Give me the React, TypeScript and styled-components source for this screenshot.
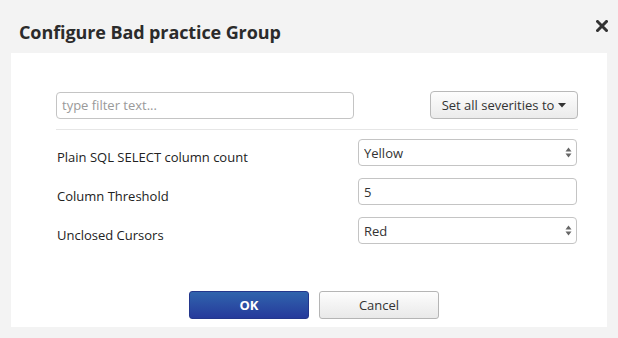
import styled, { createGlobalStyle } from 'styled-components';

const GlobalStyle = createGlobalStyle`
  html, body {
    margin: 0;
    padding: 0;
    background: #f3f3f3;
    font-family: "Open Sans", "Liberation Sans", sans-serif;
    color: #333;
  }
`;

const Dialog = styled.div`
  width: 618px;
  height: 338px;
  display: flex;
  flex-direction: column;
  background: #f3f3f3;
`;

const Header = styled.div`
  height: 53px;
  box-sizing: border-box;
  display: flex;
  justify-content: space-between;
  align-items: flex-start;
  padding: 20px 10px 0 19px;
`;

const Title = styled.h1`
  margin: 0;
  font-size: 18px;
  line-height: 24px;
  font-weight: 700;
  color: #2b2b2b;
  letter-spacing: -0.1px;
`;

const CloseButton = styled.button`
  border: 0;
  background: none;
  padding: 0;
  width: 12px;
  height: 12px;
  display: flex;
  cursor: pointer;
`;

const Panel = styled.div`
  margin-left: 11px;
  width: 596px;
  height: 274px;
  box-sizing: border-box;
  background: #fff;
  padding: 38px 29px 0 45px;
  display: flex;
  flex-direction: column;
`;

const Toolbar = styled.div`
  display: flex;
  justify-content: space-between;
  align-items: center;
  height: 28px;
  padding-bottom: 10px;
  border-bottom: 1px solid #e6e6e6;
`;

const TextInput = styled.input<{ $width: number }>`
  width: ${({ $width }) => $width}px;
  height: 27px;
  box-sizing: border-box;
  border: 1px solid #c4c4c4;
  border-radius: 4px;
  padding: 0 5px;
  font-family: inherit;
  font-size: 13px;
  color: #333;
  outline: none;
  &::placeholder {
    color: #9a9a9a;
  }
`;

const DropButton = styled.button`
  width: 148px;
  height: 28px;
  border: 1px solid #b9b9b9;
  border-radius: 4px;
  background: linear-gradient(#fdfdfd, #ebebeb);
  font-family: inherit;
  font-size: 13px;
  color: #333;
  display: flex;
  align-items: center;
  justify-content: center;
  gap: 4px;
  padding: 0;
`;

const Rows = styled.div`
  display: grid;
  grid-template-columns: 302px 219px;
  grid-auto-rows: 27px;
  row-gap: 12px;
  margin-top: 9px;
  align-items: center;
`;

const Label = styled.span`
  font-size: 13px;
  padding: 8px 0 0 1px;
  color: #222;
`;

const SelectBox = styled.div`
  position: relative;
  height: 27px;
`;

const Select = styled.select`
  width: 100%;
  height: 27px;
  box-sizing: border-box;
  appearance: none;
  border: 1px solid #c4c4c4;
  border-radius: 4px;
  background: #fff;
  padding: 0 5px;
  font-family: inherit;
  font-size: 13px;
  color: #333;
  outline: none;
`;

const Arrows = styled.svg`
  position: absolute;
  right: 5px;
  top: 8px;
  pointer-events: none;
`;

const Footer = styled.div`
  display: flex;
  gap: 10px;
  margin-top: 47px;
  padding-left: 133px;
`;

const ActionButton = styled.button<{ $primary?: boolean }>`
  width: 120px;
  height: 28px;
  border-radius: 3px;
  font-family: inherit;
  font-size: 13px;
  padding: 0;
  border: 1px solid ${({ $primary }) => ($primary ? '#24378c' : '#b5b5b5')};
  background: ${({ $primary }) =>
    $primary ? 'linear-gradient(#3064ad, #263a9b)' : 'linear-gradient(#fdfdfd, #e9e9e9)'};
  color: ${({ $primary }) => ($primary ? '#fff' : '#333')};
  font-weight: ${({ $primary }) => ($primary ? 700 : 400)};
`;

const rules = [
  { label: 'Plain SQL SELECT column count', kind: 'select', value: 'Yellow' },
  { label: 'Column Threshold', kind: 'input', value: '5' },
  { label: 'Unclosed Cursors', kind: 'select', value: 'Red' },
];

const severities = ['Green', 'Yellow', 'Red'];

export default function App() {
  return (
    <>
      <GlobalStyle />
      <Dialog>
        <Header>
          <Title>Configure Bad practice Group</Title>
          <CloseButton aria-label="Close">
            <svg width="12" height="12" viewBox="0 0 12 12">
              <path d="M1.5 1.5 L10.5 10.5 M10.5 1.5 L1.5 10.5" stroke="#333" strokeWidth="3" strokeLinecap="square" />
            </svg>
          </CloseButton>
        </Header>
        <Panel>
          <Toolbar>
            <TextInput $width={298} placeholder="type filter text..." />
            <DropButton>
              Set all severities to
              <svg width="8" height="5" viewBox="0 0 8 5">
                <path d="M0 0 H8 L4 4.5 Z" fill="#333" />
              </svg>
            </DropButton>
          </Toolbar>
          <Rows>
            {rules.map((rule) => (
              <>
                <Label key={rule.label}>{rule.label}</Label>
                {rule.kind === 'select' ? (
                  <SelectBox>
                    <Select defaultValue={rule.value}>
                      {severities.map((s) => (
                        <option key={s}>{s}</option>
                      ))}
                    </Select>
                    <Arrows width="7" height="11" viewBox="0 0 7 11">
                      <path d="M0.5 4.5 L3.5 0.5 L6.5 4.5 Z" fill="#666" />
                      <path d="M0.5 6.5 L3.5 10.5 L6.5 6.5 Z" fill="#666" />
                    </Arrows>
                  </SelectBox>
                ) : (
                  <TextInput $width={219} defaultValue={rule.value} />
                )}
              </>
            ))}
          </Rows>
          <Footer>
            <ActionButton $primary>OK</ActionButton>
            <ActionButton>Cancel</ActionButton>
          </Footer>
        </Panel>
      </Dialog>
    </>
  );
}
